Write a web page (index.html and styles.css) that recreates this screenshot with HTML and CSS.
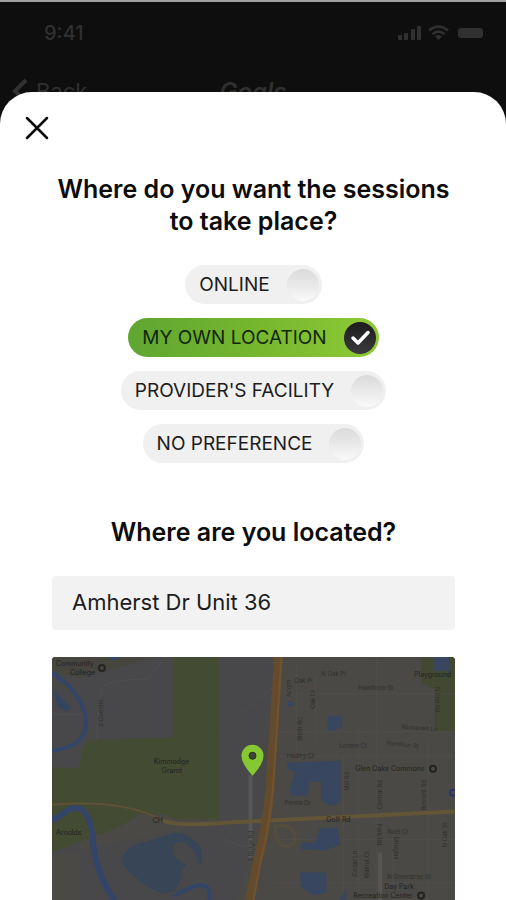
FILE: index.html
```html
<!DOCTYPE html>
<html lang="en">
<head>
    <meta charset="UTF-8">
    <meta name="viewport" content="width=device-width, initial-scale=1.0">
    <title>Session Location</title>
    <link rel="stylesheet" href="styles.css">
</head>
<body>
    <header class="app-header">
        <div class="status-bar">
            <span class="time">9:41</span>
            <svg class="status-icons" width="90" height="18" viewBox="0 0 90 18" fill="currentColor" aria-hidden="true">
                <rect x="0" y="11" width="4" height="5" rx="1"/>
                <rect x="6" y="9" width="4" height="7" rx="1"/>
                <rect x="13" y="5" width="4" height="11" rx="1"/>
                <rect x="19" y="2" width="4" height="14" rx="1"/>
                <g fill="none" stroke="currentColor" stroke-width="2.6">
                    <path d="M31 6.500Q40.500-1.500 50 6.500"/>
                    <path d="M34.500 10.200Q40.500 5 46.500 10.200"/>
                </g>
                <path d="M37 12.500q3.500-2.800 7 0L40.500 16z"/>
                <rect x="60" y="4" width="25" height="10" rx="3"/>
                <path d="M87 7q2 2 0 4z" opacity=".4"/>
            </svg>
        </div>
        <nav class="nav-bar">
            <a href="#" class="back-link">
                <svg width="16" height="24" viewBox="0 0 16 24" fill="none" stroke="currentColor" stroke-width="4" aria-hidden="true">
                    <path d="M14 1L3 12L14 23"/>
                </svg>
                Back
            </a>
            <span class="nav-title">Goals</span>
        </nav>
    </header>

    <main class="sheet">
        <button type="button" class="close-button" aria-label="Close">
            <svg width="24" height="24" viewBox="0 0 24 24" fill="none" stroke="currentColor" stroke-width="2.500" stroke-linecap="round" aria-hidden="true">
                <path d="M2 2L22 22M22 2L2 22"/>
            </svg>
        </button>

        <form class="location-form">
            <h1 id="place-title">Where do you want the sessions to take place?</h1>
            <div class="options" role="radiogroup" aria-labelledby="place-title">
                <label class="option">
                    <span>ONLINE</span>
                    <input type="radio" name="place" value="online">
                </label>
                <label class="option">
                    <span>MY OWN LOCATION</span>
                    <input type="radio" name="place" value="own" checked>
                    <svg class="check" viewBox="0 0 32 32" fill="none" stroke="#fff" stroke-width="3.500" stroke-linecap="round" stroke-linejoin="round" aria-hidden="true">
                        <path d="M9 16L14 21L24 10.500"/>
                    </svg>
                </label>
                <label class="option">
                    <span>PROVIDER'S FACILITY</span>
                    <input type="radio" name="place" value="provider">
                </label>
                <label class="option">
                    <span>NO PREFERENCE</span>
                    <input type="radio" name="place" value="any">
                </label>
            </div>

            <h2><label for="address">Where are you located?</label></h2>
            <input type="text" id="address" class="address" value="Amherst Dr Unit 36">
        </form>

        <div class="map">
            <svg class="map-tiles" viewBox="0 0 404 244" preserveAspectRatio="xMidYMin slice" role="img" aria-label="Map">
                <rect width="404" height="244" fill="#4a4945"/>
                <path fill="#48484a" d="M0 0H121V83H37Q30 83 28 103V244H185L222 110V0H168V165L0 200z"/>
                <!-- parks -->
                <path fill="#434b33" d="M121 0H167V163H125L112 158H87L68 170L50 177L0 196V111H28Q29 83 42 83L121 81z"/>
                <path fill="#424832" d="M370 0H404V75H384V32L370 26z"/>
                <path fill="#46463f" d="M28 21L92 4L106 0H0V14z"/>
                <!-- minor streets -->
                <g fill="none" stroke="#4f4e4c">
                    <path d="M45 82Q46 51 50 30Q62 22 96 22L114 0M0 57H32M168 80Q188 56 222 30M168 178Q185 195 222 190"/>
                    <path d="M233 37H404M228 75H404M228 100H404M225 183H404M222 226H404M245 8V100M264 20V90M292 100V244M325 0V244M377 80V244M342 178V244M307 70V244"/>
                </g>
                <path fill="none" stroke="#565655" stroke-width="4" d="M199 118V202M329 196V244"/>
                <!-- highways -->
                <path fill="none" stroke="#5f5134" stroke-width="2" d="M0 148Q43 145 70 150T112 165"/>
                <path fill="none" stroke="#635637" stroke-width="4" d="M110 164Q130 170 176 166L404 155"/>
                <path fill="none" stroke="#544d3d" stroke-width="3" d="M222 170Q241 165 244 181Q244 190 235 190Q224 190 224 170"/>
                <path fill="none" stroke="#644b2e" stroke-width="9" d="M227 0L220 110Q218 163 206 205L198 244"/>
                <path fill="none" stroke="#705330" stroke-width="2" d="M230 0L223 110Q220 163 209 205L202 244"/>
                <!-- water -->
                <g fill="none" stroke="#34456a" stroke-linejoin="round">
                    <path stroke-width="4" d="M0 15L16 28Q34 48 34 66Q34 90 0 94"/>
                    <path stroke-width="6" d="M0 164L10 158Q20 148 30 153Q40 162 41 185Q45 220 63 244"/>
                    <path stroke-width="4" d="M122 240Q151 222 157 233L158 244"/>
                </g>
                <path fill="#35455f" d="M2 33L20 51L15 55L6 50zM55 0H69L62 4z"/>
                <path fill="#374556" d="M70 203Q72 194 82 189L118 178Q128 173 137 180L147 187Q152 196 150 207H146Q144 192 132 186Q122 184 121 193Q121 203 135 208L133 210Q129 212 129 222L124 234L112 237Q99 234 90 226L78 216Q70 208 70 203z"/>
                <g fill="#384660">
                    <path d="M277 59H291V70L279 75L276 72z"/>
                    <path d="M236 106L289 104V146L280 149L270 144V125H258L256 139H240L238 132L244 116L236 112z"/>
                    <path d="M250 186H264L268 172L286 171L289 188L274 194L250 193z"/>
                    <path d="M248 216H275V236L262 239L250 231z"/>
                    <path d="M295 232V244H288z"/>
                    <path d="M382 0H398V14H382z"/>
                    <circle cx="239" cy="47" r="3"/>
                </g>
                <!-- street and place names -->
                <g class="map-streets">
                    <text x="270" y="19">N Oak Pl</text>
                    <text x="243" y="26">Oak Pl</text>
                    <text x="307" y="33">Hawthorn St</text>
                    <text x="350" y="72" transform="rotate(4 350 72)">Roosevelt Ln</text>
                    <text x="288" y="91">Lorene Ct</text>
                    <text x="335" y="88" transform="rotate(6 335 88)">Hamilton St</text>
                    <text x="235" y="101">Hadley Ct</text>
                    <text x="233" y="148">Peoria Dr</text>
                    <text x="336" y="177">Noel Ct</text>
                    <text x="336" y="223">N Greenbrier St</text>
                    <text transform="translate(240 40) rotate(-90)">Acorn</text>
                    <text transform="translate(264 52) rotate(-90)">Oak Dr</text>
                    <text transform="translate(251 84) rotate(-90)">Birch Rd</text>
                    <text transform="translate(384 30) rotate(90)">N Elm Rd</text>
                    <text transform="translate(298 134) rotate(-90)">Mill Rd</text>
                    <text transform="translate(331 153) rotate(-90)">Central Rd</text>
                    <text transform="translate(375 154) rotate(-90)">Bennett Rd</text>
                    <text transform="translate(396 191) rotate(-90)">N Oak St</text>
                    <text transform="translate(306 220) rotate(-90)">Cedar Ln</text>
                    <text transform="translate(318 222) rotate(-90)">Walnut Ct</text>
                    <text transform="translate(343 180) rotate(90)">Douglas</text>
                    <text transform="translate(326 167) rotate(90)">Park Rd</text>
                    <text transform="translate(201 205) rotate(-90)">S Ridge Rd</text>
                    <text transform="translate(51 70) rotate(-90)">S Quentin</text>
                </g>
                <g class="map-places">
                    <text x="4" y="9">Community</text>
                    <text x="18" y="18">College</text>
                    <text x="102" y="107">Kimmodge</text>
                    <text x="110" y="116">Grand</text>
                    <text x="4" y="178">Arnolds</text>
                    <text x="101" y="166">CH</text>
                    <text x="275" y="165">Golf Rd</text>
                    <text x="363" y="20">Playground</text>
                    <text x="304" y="114">Glen Oaks Commons</text>
                    <text x="333" y="233">Day Park</text>
                    <text x="302" y="242">Recreation Center</text>
                </g>
                <g fill="none" stroke="#232323" stroke-width="2">
                    <circle cx="50" cy="11" r="3"/>
                    <circle cx="382" cy="112" r="3"/>
                    <circle cx="370" cy="239" r="3"/>
                    <circle cx="402" cy="136" r="3" stroke="#2a3270"/>
                </g>
                <path fill="#86c832" d="M201 119Q190 107 190 99A11 11 0 0 1 212 99Q212 107 201 119z"/>
                <circle cx="201" cy="99" r="3.500" fill="#3c4632" stroke="#262c1e"/>
            </svg>
        </div>
    </main>
</body>
</html>
```

FILE: styles.css
```css
* {
    box-sizing: border-box;
}
body {
    font-family: Inter, "Liberation Sans", sans-serif;
    margin: 0;
    height: 100vh;
    display: flex;
    flex-direction: column;
    overflow: hidden;
    background-color: #0e0e0e;
    color: #0c0c0c;
}
.app-header {
    border-top: 2px solid #a0a2a2;
    padding: 18px 12px 0;
    color: #303030;
}
.status-bar {
    display: flex;
    justify-content: space-between;
    align-items: center;
    height: 26px;
    padding: 0 6px 0 32px;
}
.time {
    font-size: 20px;
    font-weight: 500;
}
.nav-bar {
    display: grid;
    grid-template-columns: 1fr auto 1fr;
    align-items: center;
    height: 48px;
    margin-top: 21px;
    font-size: 22px;
}
.back-link {
    display: flex;
    align-items: center;
    gap: 8px;
    color: inherit;
    text-decoration: none;
}
.nav-title {
    font-size: 24px;
    font-style: italic;
    font-weight: 600;
}
.sheet {
    position: relative;
    flex: 1;
    display: flex;
    flex-direction: column;
    min-height: 0;
    margin-top: -23px;
    padding: 24px 51px 0 52px;
    background-color: #fff;
    border-radius: 32px 32px 0 0;
}
.close-button {
    align-self: flex-start;
    display: flex;
    margin-left: -27px;
    padding: 0;
    border: none;
    background: none;
    color: #0c0c0c;
    cursor: pointer;
}
.location-form {
    display: flex;
    flex-direction: column;
    align-items: center;
    margin-top: 33px;
}
h1,
h2 {
    margin: 0;
    font-size: 25px;
    font-weight: 600;
    line-height: 32px;
    text-align: center;
}
.options {
    display: flex;
    flex-direction: column;
    align-items: center;
    gap: 14px;
    margin: 28px 0 53px;
}
.option {
    position: relative;
    display: flex;
    align-items: center;
    gap: 17px;
    height: 39px;
    padding: 0 3px 0 14px;
    border-radius: 20px;
    background-color: #f0f0f0;
    font-size: 19px;
    color: #1c1c1c;
    cursor: pointer;
}
.option:has(input:checked) {
    background: linear-gradient(to right, #5fa632, #75b62e 50%, #8fca35);
    color: #12260a;
}
.option input {
    appearance: none;
    width: 32px;
    height: 32px;
    margin: 0;
    border-radius: 50%;
    background: linear-gradient(#dadada, #ececec 60%, #fafafa);
}
.option input:checked {
    background: linear-gradient(#1c1c1e, #3a3a3c);
}
.check {
    position: absolute;
    right: 3px;
    width: 32px;
    height: 32px;
    pointer-events: none;
}
.address {
    width: 100%;
    height: 54px;
    margin-top: 28px;
    padding: 0 20px 2px;
    border: none;
    border-radius: 4px;
    background-color: #f2f2f2;
    font-family: inherit;
    font-size: 22px;
    color: #1c1c1c;
}
.map {
    flex: 1;
    min-height: 0;
    margin-top: 27px;
    border-radius: 4px 4px 0 0;
    overflow: hidden;
    background-color: #4a4945;
}
.map-tiles {
    display: block;
    width: 100%;
    height: 100%;
}
.map-streets {
    font-size: 6px;
    fill: #303030;
}
.map-places {
    font-size: 7px;
    fill: #222;
}
```
